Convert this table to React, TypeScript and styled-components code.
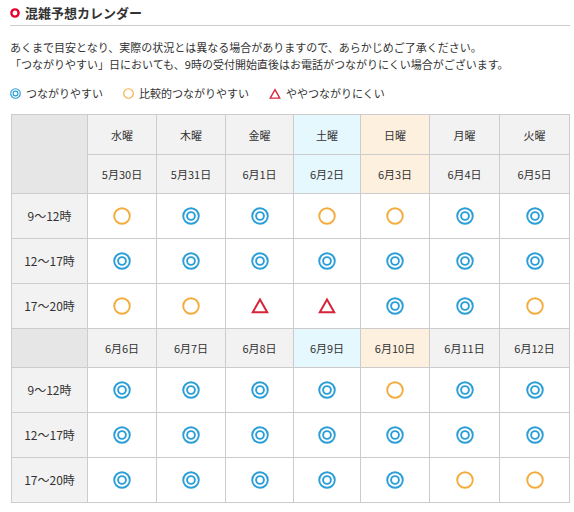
import React from 'react'
import styled, { createGlobalStyle } from 'styled-components'

type Kind = 'good' | 'fair' | 'busy'

const GlobalStyle = createGlobalStyle`
  body {
    margin: 0;
    background: #fff;
    color: #333;
    font-family: "Noto Sans CJK JP", "Noto Sans", sans-serif;
  }
`

const Wrapper = styled.div`
  width: 560px;
  padding: 0 4px 0 10px;
`

const TitleBar = styled.div`
  display: flex;
  align-items: center;
  gap: 5px;
  height: 25px;
  border-bottom: 1px solid #ccc;
`

const TitleText = styled.h2`
  margin: 0;
  font-size: 13px;
  font-weight: 700;
  line-height: 1;
  color: #333;
`

const Lead = styled.p`
  margin: 13px 0 0;
  font-size: 11px;
  line-height: 17px;
`

const Legend = styled.ul`
  display: flex;
  gap: 20px;
  margin: 12px 0 0;
  padding: 0;
  list-style: none;
  font-size: 11px;
  line-height: 17px;
`

const LegendItem = styled.li`
  display: flex;
  align-items: center;
  gap: 5px;
`

const Table = styled.table`
  margin: 12px 0 0 1px;
  width: 559px;
  table-layout: fixed;
  border-collapse: collapse;
  text-align: center;
`

const Cell = styled.td<{ $bg?: string; $h: number; $size?: number }>`
  height: ${p => p.$h}px;
  padding: 0;
  border: 1px solid #ccc;
  background: ${p => p.$bg || '#fff'};
  font-size: ${p => p.$size || 11}px;
  font-weight: 400;
  line-height: 14px;
  vertical-align: middle;
  svg {
    display: block;
    margin: 0 auto;
  }
`

const colors: Record<Kind, string> = {
  good: '#2a9ed6',
  fair: '#f3ad3f',
  busy: '#d8243a',
}

const Mark = ({ kind, size }: { kind: Kind; size: number }) => {
  const c = colors[kind]
  if (kind === 'busy') {
    return (
      <svg width={size} height={size} viewBox="0 0 18 18">
        <path d="M9 2.5 L16.2 15.2 H1.8 Z" fill="none" stroke={c} strokeWidth="2" strokeLinejoin="miter" />
      </svg>
    )
  }
  return (
    <svg width={size} height={size} viewBox="0 0 18 18">
      <circle cx="9" cy="9" r="7.8" fill="none" stroke={c} strokeWidth="1.9" />
      {kind === 'good' && <circle cx="9" cy="9" r="3.9" fill="none" stroke={c} strokeWidth="1.9" />}
    </svg>
  )
}

const TitleIcon = () => (
  <svg width="10" height="10" viewBox="0 0 10 10">
    <circle cx="5" cy="5" r="3.6" fill="none" stroke="#e5002e" strokeWidth="2.4" />
  </svg>
)

const weekdays = ['水曜', '木曜', '金曜', '土曜', '日曜', '月曜', '火曜']
const dayBg = (i: number, base: string) => (i === 3 ? '#e5f8fd' : i === 4 ? '#fdf0df' : base)
const times = ['9〜12時', '12〜17時', '17〜20時']

const G: Kind = 'good'
const F: Kind = 'fair'
const B: Kind = 'busy'

const weeks: { dates: string[]; rows: Kind[][] }[] = [
  {
    dates: ['5月30日', '5月31日', '6月1日', '6月2日', '6月3日', '6月4日', '6月5日'],
    rows: [
      [F, G, G, F, F, G, G],
      [G, G, G, G, G, G, G],
      [F, F, B, B, G, G, F],
    ],
  },
  {
    dates: ['6月6日', '6月7日', '6月8日', '6月9日', '6月10日', '6月11日', '6月12日'],
    rows: [
      [G, G, G, G, F, G, G],
      [G, G, G, G, G, G, G],
      [G, G, G, G, G, F, F],
    ],
  },
]

const colWidths = [76, 69, 69, 68, 67, 69, 70, 70]

export default function App() {
  return (
    <Wrapper>
      <GlobalStyle />
      <TitleBar>
        <TitleIcon />
        <TitleText>混雑予想カレンダー</TitleText>
      </TitleBar>
      <Lead>
        あくまで目安となり、実際の状況とは異なる場合がありますので、あらかじめご了承ください。
        <br />
        「つながりやすい」日においても、9時の受付開始直後はお電話がつながりにくい場合がございます。
      </Lead>
      <Legend>
        <LegendItem>
          <Mark kind="good" size={11} />
          つながりやすい
        </LegendItem>
        <LegendItem>
          <Mark kind="fair" size={11} />
          比較的つながりやすい
        </LegendItem>
        <LegendItem>
          <Mark kind="busy" size={12} />
          ややつながりにくい
        </LegendItem>
      </Legend>
      <Table>
        <colgroup>
          {colWidths.map((w, i) => (
            <col key={i} style={{ width: w }} />
          ))}
        </colgroup>
        <tbody>
          {weeks.map((week, wi) => (
            <React.Fragment key={wi}>
              {wi === 0 && (
                <tr>
                  <Cell as="th" rowSpan={2} $h={39} $bg="#e6e6e6" />
                  {weekdays.map((d, i) => (
                    <Cell as="th" key={d} $h={39} $bg={dayBg(i, '#f2f2f2')}>
                      {d}
                    </Cell>
                  ))}
                </tr>
              )}
              <tr>
                {wi > 0 && <Cell as="th" $h={38} $bg="#e6e6e6" />}
                {week.dates.map((d, i) => (
                  <Cell as="th" key={d} $h={38} $bg={dayBg(i, '#f2f2f2')}>
                    {d}
                  </Cell>
                ))}
              </tr>
              {week.rows.map((row, ri) => (
                <tr key={ri}>
                  <Cell as="th" $h={44} $bg="#f2f2f2" $size={12}>
                    {times[ri]}
                  </Cell>
                  {row.map((k, ci) => (
                    <Cell key={ci} $h={44}>
                      <Mark kind={k} size={18} />
                    </Cell>
                  ))}
                </tr>
              ))}
            </React.Fragment>
          ))}
        </tbody>
      </Table>
    </Wrapper>
  )
}
